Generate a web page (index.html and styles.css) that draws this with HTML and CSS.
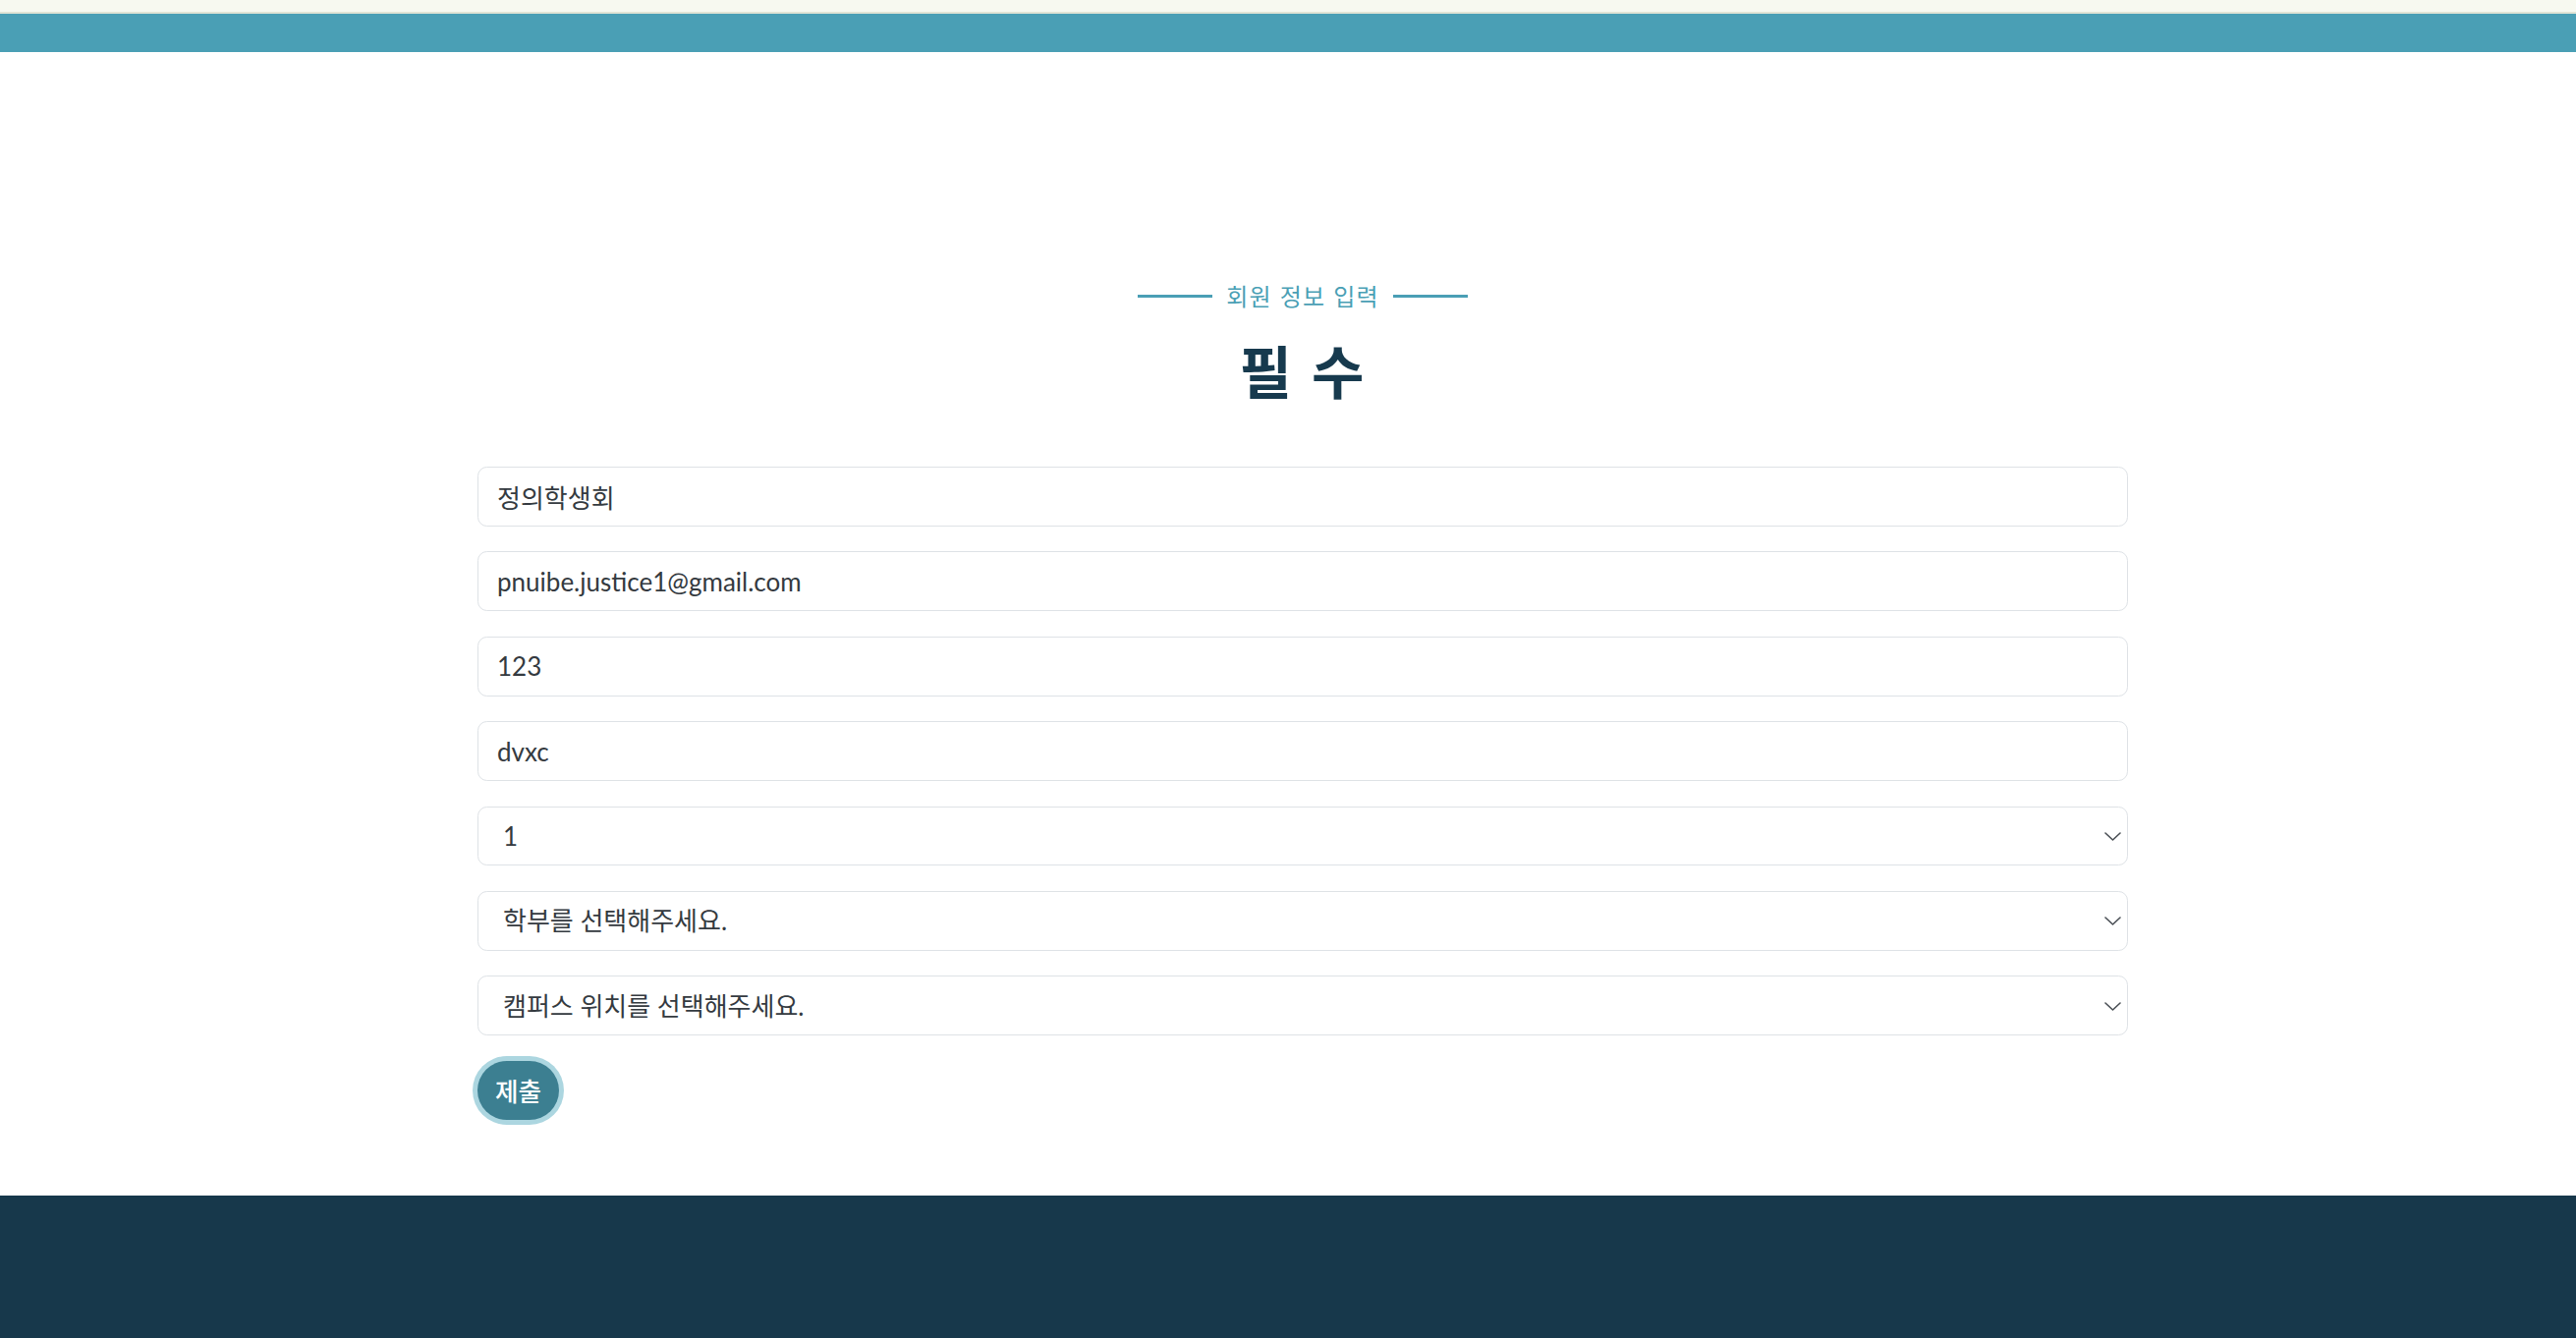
FILE: index.html
```html
<!DOCTYPE html>
<html lang="ko">
<head>
<meta charset="utf-8">
<title>회원 정보 입력</title>
<link rel="stylesheet" href="styles.css">
</head>
<body>
<div class="topstrip"></div>
<header class="navbar"></header>
<main class="page">
  <section class="container">
    <div class="section-header">
      <p class="subtitle"><span class="rule"></span><span class="subtitle-text">회원 정보 입력</span><span class="rule"></span></p>
      <h1 class="title">필 수</h1>
    </div>
    <form class="form">
      <input class="field" type="text" value="정의학생회">
      <input class="field" type="text" value="pnuibe.justice1@gmail.com">
      <input class="field" type="text" value="123">
      <input class="field" type="text" value="dvxc">
      <div class="select-wrap">
        <select class="field select"><option>1</option></select>
        <svg class="chevron" viewBox="0 0 17 9" width="17" height="9"><path d="M1 1 L8.5 8 L16 1" fill="none" stroke="#4a4f55" stroke-width="1.6" stroke-linecap="round" stroke-linejoin="round"/></svg>
      </div>
      <div class="select-wrap">
        <select class="field select"><option>학부를 선택해주세요.</option></select>
        <svg class="chevron" viewBox="0 0 17 9" width="17" height="9"><path d="M1 1 L8.5 8 L16 1" fill="none" stroke="#4a4f55" stroke-width="1.6" stroke-linecap="round" stroke-linejoin="round"/></svg>
      </div>
      <div class="select-wrap">
        <select class="field select"><option>캠퍼스 위치를 선택해주세요.</option></select>
        <svg class="chevron" viewBox="0 0 17 9" width="17" height="9"><path d="M1 1 L8.5 8 L16 1" fill="none" stroke="#4a4f55" stroke-width="1.6" stroke-linecap="round" stroke-linejoin="round"/></svg>
      </div>
      <div class="actions">
        <button class="submit" type="button">제출</button>
      </div>
    </form>
  </section>
</main>
<footer class="footer"></footer>
</body>
</html>
```

FILE: styles.css
```css
html, body {
  margin: 0;
  padding: 0;
  background: #ffffff;
}

body {
  font-family: Lato, "Noto Sans CJK KR", sans-serif;
  color: #212529;
}

.topstrip {
  height: 12px;
  background: #f7f9f0;
  border-bottom: 2px solid #e1e4d5;
}

.navbar {
  height: 39px;
  background: #4a9fb5;
}

.page {
  padding: 233px 0 77px 30px;
}

.container {
  width: 1680px;
  margin: 0 auto;
}

.section-header {
  text-align: center;
}

.subtitle {
  margin: 0;
  display: flex;
  justify-content: center;
  align-items: center;
  height: 30px;
  gap: 14px;
}

.rule {
  display: block;
  width: 76px;
  height: 3px;
  background: #4a9fb5;
}

.subtitle-text {
  font-family: "Noto Sans CJK KR", sans-serif;
  font-size: 24px;
  letter-spacing: 1.2px;
  color: #4a9fb5;
  line-height: 30px;
}

.title {
  margin: 22px 0 0;
  font-family: "Noto Sans CJK KR", sans-serif;
  font-size: 58px;
  font-weight: 700;
  letter-spacing: 2px;
  line-height: 76px;
  color: #173a4e;
}

.form {
  margin-top: 61px;
  display: flex;
  flex-direction: column;
  gap: 25.6px;
}

.field {
  display: block;
  box-sizing: border-box;
  width: 100%;
  height: 60.8px;
  padding: 0 19px;
  border: 1.6px solid #dee2e6;
  border-radius: 9.6px;
  background: #ffffff;
  font-family: Lato, "Noto Sans CJK KR", sans-serif;
  font-size: 26px;
  color: #343a40;
  outline: none;
}

.select-wrap {
  position: relative;
}

.select {
  appearance: none;
  -webkit-appearance: none;
  padding-left: 25px;
  padding-right: 40px;
}

.chevron {
  position: absolute;
  right: 7px;
  top: 50%;
  margin-top: -4px;
  pointer-events: none;
}

.actions {
  display: flex;
}

.submit {
  height: 60px;
  padding: 0 18px;
  border: none;
  border-radius: 30px;
  background: #3c7f91;
  color: #ffffff;
  font-family: "Noto Sans CJK KR", sans-serif;
  font-size: 25.6px;
  font-weight: 500;
  box-shadow: 0 0 0 5px #acd6e0;
  margin-left: 0;
}

.footer {
  height: 145px;
  background: #17384b;
}
```
